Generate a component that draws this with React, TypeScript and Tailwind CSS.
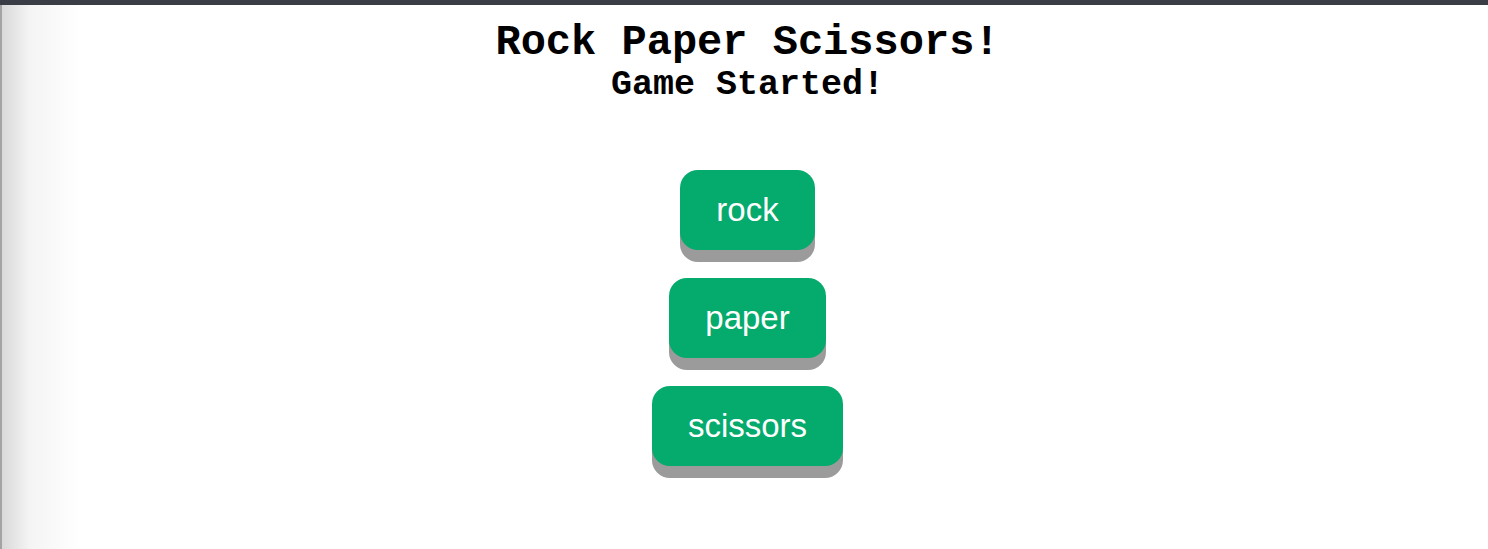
import React, { useState } from 'react';

const CHOICES = ['rock', 'paper', 'scissors'];

const App: React.FC = () => {
  const [pick, setPick] = useState<string | null>(null);

  return (
    <div className="min-h-[549px] bg-white">
      {/* window top bar */}
      <div className="h-[5px] bg-[#3a3d45]" />

      <div className="min-h-[544px] pl-[7px] bg-[linear-gradient(to_right,#a3a3a3_0px,#a3a3a3_2px,#d9d9d9_2px,#f4f4f4_30px,#ffffff_80px)]">
        <div className="flex flex-col items-center text-black font-['Liberation_Mono','Courier_New',monospace] font-bold">
          <h1 className="text-[42px] leading-[42px] mt-[17px]">Rock Paper Scissors!</h1>
          <h2 className="text-[35px] leading-[40px] mt-[1px]">{pick ? `You picked ${pick}!` : 'Game Started!'}</h2>
        </div>

        <div className="flex flex-col items-center gap-[28px] mt-[65px]">
          {CHOICES.map((c) => (
            <button
              key={c}
              onClick={() => setPick(c)}
              className="h-[80px] px-[36px] rounded-[18px] bg-[#05aa6d] text-white text-[33px] font-['Liberation_Sans',Arial,sans-serif] shadow-[0_12px_0_#9b9b9b] cursor-pointer"
            >
              {c}
            </button>
          ))}
        </div>
      </div>
    </div>
  );
};

export default App;
